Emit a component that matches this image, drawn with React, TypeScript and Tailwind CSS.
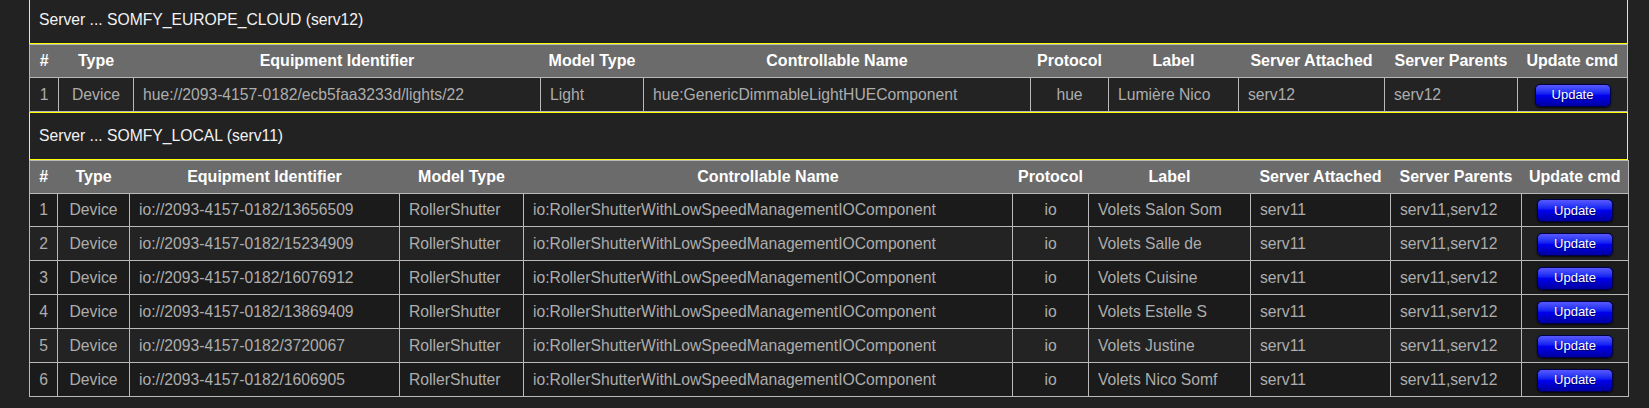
import type { ReactNode } from "react";

type Row = {
  type: string;
  id: string;
  model: string;
  controllable: string;
  protocol: string;
  label: string;
  attached: string;
  parents: string;
};

type Section = {
  title: string;
  widths: string[];
  heights: string[];
  dark: boolean[];
  rows: Row[];
};

const headers = [
  "#",
  "Type",
  "Equipment Identifier",
  "Model Type",
  "Controllable Name",
  "Protocol",
  "Label",
  "Server Attached",
  "Server Parents",
  "Update cmd",
];

const shutter = "io:RollerShutterWithLowSpeedManagementIOComponent";

const sections: Section[] = [
  {
    title: "Server ... SOMFY_EUROPE_CLOUD (serv12)",
    widths: ["w-[29px]", "w-[75px]", "w-[407px]", "w-[103px]", "w-[387px]", "w-[78px]", "w-[130px]", "w-[146px]", "w-[133px]", "w-[110px]"],
    heights: ["h-[34px]"],
    dark: [false],
    rows: [
      {
        type: "Device",
        id: "hue://2093-4157-0182/ecb5faa3233d/lights/22",
        model: "Light",
        controllable: "hue:GenericDimmableLightHUEComponent",
        protocol: "hue",
        label: "Lumière Nico",
        attached: "serv12",
        parents: "serv12",
      },
    ],
  },
  {
    title: "Server ... SOMFY_LOCAL (serv11)",
    widths: ["w-[28px]", "w-[72px]", "w-[270px]", "w-[124px]", "w-[489px]", "w-[76px]", "w-[162px]", "w-[140px]", "w-[131px]", "w-[107px]"],
    heights: ["h-[33px]", "h-[34px]", "h-[34px]", "h-[34px]", "h-[34px]", "h-[34px]"],
    dark: [true, false, true, true, false, true],
    rows: [
      ["io://2093-4157-0182/13656509", "Volets Salon Som"],
      ["io://2093-4157-0182/15234909", "Volets Salle de"],
      ["io://2093-4157-0182/16076912", "Volets Cuisine"],
      ["io://2093-4157-0182/13869409", "Volets Estelle S"],
      ["io://2093-4157-0182/3720067", "Volets Justine"],
      ["io://2093-4157-0182/1606905", "Volets Nico Somf"],
    ].map(([id, label]) => ({
      type: "Device",
      id,
      model: "RollerShutter",
      controllable: shutter,
      protocol: "io",
      label,
      attached: "serv11",
      parents: "serv11,serv12",
    })),
  },
];

function Cell({ children, center }: { children: ReactNode; center?: boolean }) {
  return (
    <td
      className={
        center
          ? "overflow-hidden whitespace-nowrap border border-[#b9b9b9] px-0 text-center"
          : "overflow-hidden whitespace-nowrap border border-[#b9b9b9] px-[9px] text-left"
      }
    >
      {children}
    </td>
  );
}

function UpdateButton() {
  return (
    <button className="inline-flex h-[23px] w-[76px] items-center justify-center rounded-[5px] border border-[#00004a] bg-linear-to-b from-[#5858ff] via-[#0000ee] to-[#0000a0] pb-px text-[13px] leading-none text-white shadow-[0_1px_2px_rgba(0,0,0,0.8)] [text-shadow:0_1px_1px_#000050]">
      Update
    </button>
  );
}

function ServerTable({ section }: { section: Section }) {
  return (
    <div>
      <div className="flex h-[48px] items-center border border-[#ffff00] bg-[#222222] px-[9px] text-[15.7px] text-[#f2f2f2]">
        {section.title}
      </div>
      <table className="w-full table-fixed border-collapse border border-[#b9b9b9]">
        <colgroup>
          {section.widths.map((w, i) => (
            <col key={i} className={w} />
          ))}
        </colgroup>
        <thead>
          <tr className="h-[33px] bg-[#6b6b6b]">
            {headers.map((h) => (
              <th
                key={h}
                className="whitespace-nowrap border-b border-[#b9b9b9] px-0 text-center text-[16px] font-bold text-white"
              >
                {h}
              </th>
            ))}
          </tr>
        </thead>
        <tbody className="text-[15.7px] text-[#adadad]">
          {section.rows.map((r, i) => (
            <tr
              key={r.id}
              className={`${section.heights[i]} ${section.dark[i] ? "bg-[#1b1b1b]" : "bg-[#232323]"}`}
            >
              <Cell center>{i + 1}</Cell>
              <Cell center>{r.type}</Cell>
              <Cell>{r.id}</Cell>
              <Cell>{r.model}</Cell>
              <Cell>{r.controllable}</Cell>
              <Cell center>{r.protocol}</Cell>
              <Cell>{r.label}</Cell>
              <Cell>{r.attached}</Cell>
              <Cell>{r.parents}</Cell>
              <Cell center>
                <UpdateButton />
              </Cell>
            </tr>
          ))}
        </tbody>
      </table>
    </div>
  );
}

export default function App() {
  return (
    <div className="h-[408px] overflow-hidden bg-[#222222] font-['Liberation_Sans',Arial,sans-serif]">
      <div className="-mt-[4px] ml-[29px] flex w-[1599px] flex-col">
        {sections.map((s) => (
          <ServerTable key={s.title} section={s} />
        ))}
      </div>
    </div>
  );
}
